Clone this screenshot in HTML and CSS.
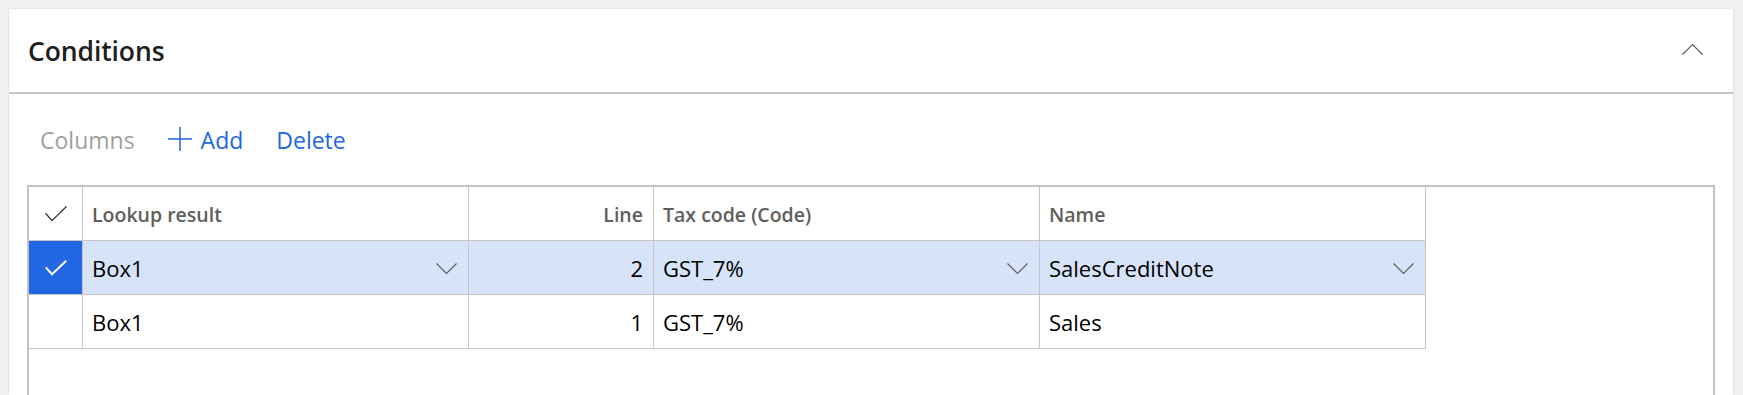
FILE: index.html
```
<!DOCTYPE html>
<html lang="en">
<head>
<meta charset="utf-8">
<title>Conditions</title>
<link rel="stylesheet" href="styles.css">
</head>
<body>
<div class="page">
  <section class="card">
    <header class="card-head">
      <h2 class="title">Conditions</h2>
      <button class="collapse" aria-label="Collapse">
        <svg width="21" height="11" viewBox="0 0 21 11"><polyline points="0.5,10.5 10.5,0.6 20.5,10.5" fill="none" stroke="#605e5c" stroke-width="1.2"/></svg>
      </button>
    </header>
    <div class="card-body">
      <div class="toolbar">
        <button class="tb-btn tb-disabled">Columns</button>
        <button class="tb-btn">
          <svg class="plus" width="24" height="24" viewBox="0 0 24 24"><path d="M12 0V24M0 12H24" fill="none" stroke="#2266e3" stroke-width="1.5"/></svg>
          Add
        </button>
        <button class="tb-btn">Delete</button>
      </div>
      <div class="grid">
        <div class="grid-table">
          <div class="cell cell-check">
            <svg width="22" height="16" viewBox="0 0 22 16"><polyline points="0.5,7.3 7,14.6 21.5,0.5" fill="none" stroke="#323130" stroke-width="1.3"/></svg>
          </div>
          <div class="cell cell-head">Lookup result</div>
          <div class="cell cell-head cell-num">Line</div>
          <div class="cell cell-head">Tax code (Code)</div>
          <div class="cell cell-head">Name</div>

          <div class="cell cell-check cell-check-on">
            <svg width="22" height="16" viewBox="0 0 22 16"><polyline points="0.8,7.3 7,14.2 21.2,0.8" fill="none" stroke="#ffffff" stroke-width="2"/></svg>
          </div>
          <div class="cell cell-sel cell-drop">Box1<svg class="chev" width="21" height="11" viewBox="0 0 21 11"><polyline points="0.5,0.5 10.5,10.4 20.5,0.5" fill="none" stroke="#605e5c" stroke-width="1.2"/></svg></div>
          <div class="cell cell-sel cell-num">2</div>
          <div class="cell cell-sel cell-drop">GST_7%<svg class="chev" width="21" height="11" viewBox="0 0 21 11"><polyline points="0.5,0.5 10.5,10.4 20.5,0.5" fill="none" stroke="#605e5c" stroke-width="1.2"/></svg></div>
          <div class="cell cell-sel cell-drop">SalesCreditNote<svg class="chev" width="21" height="11" viewBox="0 0 21 11"><polyline points="0.5,0.5 10.5,10.4 20.5,0.5" fill="none" stroke="#605e5c" stroke-width="1.2"/></svg></div>

          <div class="cell cell-check"></div>
          <div class="cell">Box1</div>
          <div class="cell cell-num">1</div>
          <div class="cell">GST_7%</div>
          <div class="cell">Sales</div>
        </div>
      </div>
    </div>
  </section>
</div>
</body>
</html>
```
FILE: styles.css
```
* { box-sizing: border-box; }

html, body {
  margin: 0;
  height: 395px;
  overflow: hidden;
}

body {
  background: #f1f0ef;
  font-family: "Open Sans", "Noto Sans", Arial, sans-serif;
  color: #201f1e;
}

.page {
  padding: 9px 10px 0 9px;
}

.card {
  background: #ffffff;
  border-radius: 2px 2px 0 0;
  box-shadow: 0 0 3px rgba(0, 0, 0, 0.10), 0 1px 2px rgba(0, 0, 0, 0.06);
  height: 386px;
}

.card-head {
  height: 85px;
  border-bottom: 2px solid #c8c6c4;
  display: flex;
  align-items: center;
  justify-content: space-between;
  padding: 0 30px 0 19px;
}

.title {
  margin: 0;
  font-size: 26.5px;
  font-weight: 600;
  color: #201f1e;
  letter-spacing: -0.1px;
}

.collapse {
  border: 0;
  background: none;
  padding: 0;
  margin: 0 0 3px 0;
  display: flex;
}

.card-body {
  padding: 23px 18px 0 18px;
}

.toolbar {
  height: 46px;
  display: flex;
  align-items: center;
  gap: 8px;
  margin-bottom: 22px;
}

.tb-btn {
  border: 0;
  background: none;
  font-family: inherit;
  font-size: 23px;
  color: #2266e3;
  padding: 0 12px 0 13px;
  height: 46px;
  display: flex;
  align-items: center;
  gap: 9px;
}

.tb-disabled {
  color: #a19f9d;
}

.plus {
  margin-top: -3px;
}

.grid {
  border: 2px solid #c4c2c0;
  height: 240px;
}

.grid-table {
  display: grid;
  grid-template-columns: 54px 386px 185px 386px 386px;
  grid-auto-rows: 54px;
  width: max-content;
}

.cell {
  border-right: 1px solid #c8c6c4;
  border-bottom: 1px solid #c8c6c4;
  display: flex;
  align-items: center;
  padding: 0 10px 0 9px;
  font-size: 22px;
  color: #000000;
  white-space: nowrap;
}

.cell-head {
  font-size: 19.5px;
  font-weight: 600;
  color: #605e5c;
  padding-top: 2px;
}

.cell-num {
  justify-content: flex-end;
}

.cell-check {
  justify-content: center;
  padding: 0;
}

.cell-check-on {
  background: #2266e3;
}

.cell-sel {
  background: #d6e3f9;
}

.cell-drop {
  justify-content: space-between;
}

.chev {
  margin-right: 1px;
  margin-top: 2px;
}
```
